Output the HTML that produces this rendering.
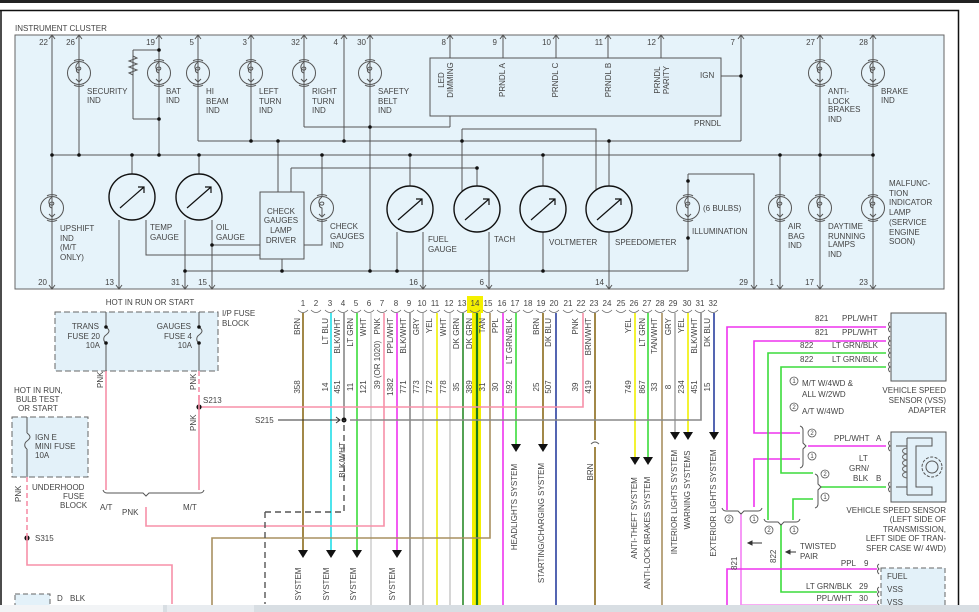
<!DOCTYPE html>
<html><head><meta charset="utf-8"><style>
html,body{margin:0;padding:0;background:#fff;}
svg{display:block;font-family:"Liberation Sans",sans-serif;font-size:8px;fill:#444;}
text{fill:#444;stroke:none;}
.w{fill:none;stroke:#555;stroke-width:1;}
</style></head><body>
<svg width="979" height="612" viewBox="0 0 979 612" xmlns="http://www.w3.org/2000/svg">
<defs>
<g id="bulb"><circle r="11.5" fill="none" stroke="#555"/><path d="M-5,-12 a6,3 0 0 1 10,0 M-5,12 a6,-3 0 0 0 10,0 M0,-11 c-4,3 -4,7 -1,8 c3,1 4,-3 1,-3 c-3,0 -4,5 0,6 l0,8" fill="none" stroke="#555"/><path d="M-3,6 l3,3 3,-3" fill="none" stroke="#555"/></g>
<g id="gauge"><circle r="23" fill="none" stroke="#111" stroke-width="1.4"/><path d="M-12,11 L12,-10 M6,-10 L12,-10 L12,-4" fill="none" stroke="#111" stroke-width="1.2"/></g>
<path id="up" d="M-3,4 L0,0 L3,4" fill="none" stroke="#555"/>
<path id="dn" d="M-3,-4 L0,0 L3,-4" fill="none" stroke="#555"/>
<path id="ar" d="M-5,-8 L5,-8 L0,0 Z" fill="#111"/>
</defs>
<rect x="0" y="0" width="979" height="3" fill="#222"/>
<path d="M0,10.5 H958.5 V605" fill="none" stroke="#111" stroke-width="1.5"/>
<path d="M1,10 V605" stroke="#111" stroke-width="1.5"/>
<text x="15" y="31">INSTRUMENT CLUSTER</text>
<rect x="15" y="35" width="929" height="254" fill="#e6f3fa" stroke="#666"/>
<g class="w">
<path d="M52,35V289 M79,35V155 M159,35V155 M133,50V119 M133,50H159 M133,119H159 M198,35V141 M198,141H741 M741,35V141 M721,76H741 M251,35V141 M344,35V141 M278,141V192 M304,35V127 M304,127H450 M450,116V127 M450,35V58 M370,35V271 M503,35V58 M556,35V58 M608,35V58 M661,35V58 M52,155H873 M132,155V174 M199,155V174 M119,220V289 M146,220V255H260 M185,220V289 M212,220V289 M212,245H260 M291,168H477 M291,168V192 M322,155V197 M322,219V245H304 M282,259V271 M185,271H688 M410,155V186 M397,232V271 M423,232V289 M477,168V186 M462,129V196 M462,129H596V195 M489,232V289 M543,155V186 M543,232V271 M609,141V186 M609,232V289 M688,174V271 M688,174H754V289 M780,155V289 M820,35V289 M873,35V289"/>
<path d="M133,56l4,2-8,3 8,3-8,3 8,3-8,3 4,2" />
</g>
<rect x="430" y="58" width="291" height="58" fill="#e3f1f9" stroke="#555"/>
<rect x="260" y="192" width="44" height="67" fill="#e3f1f9" stroke="#555"/>
<g fill="#111">
<circle cx="159" cy="50" r="1.8"/><circle cx="159" cy="119" r="1.8"/><circle cx="741" cy="76" r="1.8"/>
<circle cx="251" cy="141" r="1.8"/><circle cx="278" cy="141" r="1.8"/><circle cx="344" cy="141" r="1.8"/><circle cx="462" cy="141" r="1.8"/><circle cx="609" cy="141" r="1.8"/>
<circle cx="370" cy="127" r="1.8"/><circle cx="477" cy="168" r="1.8"/>
<circle cx="52" cy="155" r="1.8"/><circle cx="79" cy="155" r="1.8"/><circle cx="132" cy="155" r="1.8"/><circle cx="159" cy="155" r="1.8"/><circle cx="199" cy="155" r="1.8"/><circle cx="322" cy="155" r="1.8"/><circle cx="410" cy="155" r="1.8"/><circle cx="543" cy="155" r="1.8"/><circle cx="780" cy="155" r="1.8"/><circle cx="820" cy="155" r="1.8"/><circle cx="873" cy="155" r="1.8"/>
<circle cx="212" cy="245" r="1.8"/><circle cx="185" cy="271" r="1.8"/><circle cx="282" cy="271" r="1.8"/><circle cx="370" cy="271" r="1.8"/><circle cx="397" cy="271" r="1.8"/><circle cx="543" cy="271" r="1.8"/><circle cx="688" cy="181" r="1.8"/><circle cx="688" cy="238" r="1.8"/>
</g>
<g fill="#e6f3fa">
<use href="#bulb" x="79" y="73"/><use href="#bulb" x="159" y="73"/><use href="#bulb" x="198" y="73"/><use href="#bulb" x="251" y="73"/><use href="#bulb" x="304" y="73"/><use href="#bulb" x="370" y="73"/><use href="#bulb" x="820" y="73"/><use href="#bulb" x="873" y="73"/>
<use href="#bulb" x="52" y="208"/><use href="#bulb" x="322" y="208"/><use href="#bulb" x="688" y="208"/><use href="#bulb" x="780" y="208"/><use href="#bulb" x="820" y="208"/><use href="#bulb" x="873" y="208"/>
</g>
<circle cx="132" cy="197" r="23" fill="#e6f3fa"/><use href="#gauge" x="132" y="197"/>
<circle cx="199" cy="197" r="23" fill="#e6f3fa"/><use href="#gauge" x="199" y="197"/>
<circle cx="410" cy="209" r="23" fill="#e6f3fa"/><use href="#gauge" x="410" y="209"/>
<circle cx="477" cy="209" r="23" fill="#e6f3fa"/><use href="#gauge" x="477" y="209"/>
<circle cx="543" cy="209" r="23" fill="#e6f3fa"/><use href="#gauge" x="543" y="209"/>
<circle cx="609" cy="209" r="23" fill="#e6f3fa"/><use href="#gauge" x="609" y="209"/>
<g>
<use href="#up" x="52" y="35"/><use href="#up" x="79" y="35"/><use href="#up" x="159" y="35"/><use href="#up" x="198" y="35"/><use href="#up" x="251" y="35"/><use href="#up" x="304" y="35"/><use href="#up" x="344" y="35"/><use href="#up" x="370" y="35"/><use href="#up" x="450" y="35"/><use href="#up" x="503" y="35"/><use href="#up" x="556" y="35"/><use href="#up" x="608" y="35"/><use href="#up" x="661" y="35"/><use href="#up" x="741" y="35"/><use href="#up" x="820" y="35"/><use href="#up" x="873" y="35"/>
<use href="#dn" x="52" y="289"/><use href="#dn" x="119" y="289"/><use href="#dn" x="185" y="289"/><use href="#dn" x="212" y="289"/><use href="#dn" x="423" y="289"/><use href="#dn" x="489" y="289"/><use href="#dn" x="609" y="289"/><use href="#dn" x="754" y="289"/><use href="#dn" x="780" y="289"/><use href="#dn" x="820" y="289"/><use href="#dn" x="873" y="289"/>
</g>
<g text-anchor="end">
<text x="48" y="45">22</text><text x="75" y="45">26</text><text x="155" y="45">19</text><text x="194" y="45">5</text><text x="247" y="45">3</text><text x="300" y="45">32</text><text x="338" y="45">4</text><text x="366" y="45">30</text><text x="446" y="45">8</text><text x="497" y="45">9</text><text x="551" y="45">10</text><text x="603" y="45">11</text><text x="656" y="45">12</text><text x="735" y="45">7</text><text x="815" y="45">27</text><text x="868" y="45">28</text>
<text x="47" y="285">20</text><text x="114" y="285">13</text><text x="180" y="285">31</text><text x="207" y="285">15</text><text x="418" y="285">16</text><text x="484" y="285">6</text><text x="604" y="285">14</text><text x="748" y="285">29</text><text x="774" y="285">1</text><text x="814" y="285">17</text><text x="868" y="285">23</text>
</g>
<text x="87" y="94">SECURITY</text><text x="87" y="103">IND</text>
<text x="166" y="94">BAT</text><text x="166" y="103">IND</text>
<text x="206" y="94">HI</text><text x="206" y="104">BEAM</text><text x="206" y="113">IND</text>
<text x="259" y="94">LEFT</text><text x="259" y="104">TURN</text><text x="259" y="113">IND</text>
<text x="312" y="94">RIGHT</text><text x="312" y="104">TURN</text><text x="312" y="113">IND</text>
<text x="378" y="94">SAFETY</text><text x="378" y="104">BELT</text><text x="378" y="113">IND</text>
<text x="828" y="94">ANTI-</text><text x="828" y="104">LOCK</text><text x="828" y="112">BRAKES</text><text x="828" y="122">IND</text>
<text x="881" y="94">BRAKE</text><text x="881" y="103">IND</text>
<text x="700" y="78">IGN</text><text x="694" y="126">PRNDL</text>
<g text-anchor="middle">
<text transform="translate(444,80) rotate(-90)">LED</text><text transform="translate(453,80) rotate(-90)">DIMMING</text>
<text transform="translate(505,80) rotate(-90)">PRNDL A</text><text transform="translate(558,80) rotate(-90)">PRNDL C</text><text transform="translate(611,80) rotate(-90)">PRNDL B</text>
<text transform="translate(660,80) rotate(-90)">PRNDL</text><text transform="translate(669,80) rotate(-90)">PARITY</text>
<text x="281" y="214">CHECK</text><text x="281" y="223">GAUGES</text><text x="281" y="233">LAMP</text><text x="281" y="243">DRIVER</text>
</g>
<text x="60" y="231">UPSHIFT</text><text x="60" y="241">IND</text><text x="60" y="250">(M/T</text><text x="60" y="260">ONLY)</text>
<text x="150" y="230">TEMP</text><text x="150" y="240">GAUGE</text>
<text x="216" y="230">OIL</text><text x="216" y="240">GAUGE</text>
<text x="330" y="229">CHECK</text><text x="330" y="239">GAUGES</text><text x="330" y="248">IND</text>
<text x="428" y="242">FUEL</text><text x="428" y="252">GAUGE</text>
<text x="494" y="242">TACH</text><text x="549" y="245">VOLTMETER</text><text x="615" y="245">SPEEDOMETER</text>
<text x="703" y="211">(6 BULBS)</text><text x="692" y="234">ILLUMINATION</text>
<text x="788" y="229">AIR</text><text x="788" y="239">BAG</text><text x="788" y="248">IND</text>
<text x="828" y="229">DAYTIME</text><text x="828" y="239">RUNNING</text><text x="828" y="247">LAMPS</text><text x="828" y="257">IND</text>
<text x="889" y="186">MALFUNC-</text><text x="889" y="196">TION</text><text x="889" y="205">INDICATOR</text><text x="889" y="215">LAMP</text><text x="889" y="225">(SERVICE</text><text x="889" y="235">ENGINE</text><text x="889" y="244">SOON)</text>

<rect x="467" y="296" width="16" height="17" fill="#f4f000"/>
<g text-anchor="middle">
<text x="303" y="306">1</text><text x="316" y="306">2</text><text x="330" y="306">3</text><text x="343" y="306">4</text><text x="356" y="306">5</text><text x="369" y="306">6</text><text x="382" y="306">7</text><text x="396" y="306">8</text><text x="409" y="306">9</text><text x="422" y="306">10</text><text x="435" y="306">11</text><text x="449" y="306">12</text><text x="462" y="306">13</text><text x="475" y="306">14</text><text x="488" y="306">15</text><text x="502" y="306">16</text><text x="515" y="306">17</text><text x="528" y="306">18</text><text x="541" y="306">19</text><text x="554" y="306">20</text><text x="568" y="306">21</text><text x="581" y="306">22</text><text x="594" y="306">23</text><text x="607" y="306">24</text><text x="621" y="306">25</text><text x="634" y="306">26</text><text x="647" y="306">27</text><text x="660" y="306">28</text><text x="673" y="306">29</text><text x="687" y="306">30</text><text x="700" y="306">31</text><text x="713" y="306">32</text>
</g>
<path d="M298,310q5,5 10,0 M311,310q5,5 10,0 M325,310q5,5 10,0 M338,310q5,5 10,0 M351,310q5,5 10,0 M364,310q5,5 10,0 M377,310q5,5 10,0 M391,310q5,5 10,0 M404,310q5,5 10,0 M417,310q5,5 10,0 M430,310q5,5 10,0 M444,310q5,5 10,0 M457,310q5,5 10,0 M470,310q5,5 10,0 M483,310q5,5 10,0 M497,310q5,5 10,0 M510,310q5,5 10,0 M523,310q5,5 10,0 M536,310q5,5 10,0 M549,310q5,5 10,0 M563,310q5,5 10,0 M576,310q5,5 10,0 M589,310q5,5 10,0 M602,310q5,5 10,0 M616,310q5,5 10,0 M629,310q5,5 10,0 M642,310q5,5 10,0 M655,310q5,5 10,0 M668,310q5,5 10,0 M682,310q5,5 10,0 M695,310q5,5 10,0 M708,310q5,5 10,0" fill="none" stroke="#666" stroke-width="0.8"/>

<rect x="472" y="313" width="9" height="299" fill="#f4f000"/>
<g fill="none" stroke-width="1.6">
<path d="M303,313V550" stroke="#8b6b1b"/>
<path d="M331,313V550" stroke="#22dde8"/>
<path d="M344,313V420" stroke="#888"/>
<path d="M357,313V550" stroke="#3bdc3b"/>
<path d="M371,313V612" stroke="#d0d0d0"/>
<path d="M384,313V526H146V507" stroke="#f790a8"/>
<path d="M397,313V550" stroke="#ee33ee"/>
<path d="M410,313V612" stroke="#888"/>
<path d="M423,313V612" stroke="#bbb"/>
<path d="M437,313V612" stroke="#f0f000"/>
<path d="M450,313V612" stroke="#ccc"/>
<path d="M463,313V612" stroke="#2a8a2a"/>
<path d="M477,313V612" stroke="#1a7a1a" stroke-width="2.2"/>
<path d="M490,313V538H212V612" stroke="#a89060"/>
<path d="M503,313V612" stroke="#ee33ee"/>
<path d="M516,313V445" stroke="#3bdc3b"/>
<path d="M543,313V445" stroke="#8b6b1b"/>
<path d="M556,313V612" stroke="#2a3f9e"/>
<path d="M583,313V407H200" stroke="#f790a8"/>
<path d="M595,313V440 M595,447V612" stroke="#8b6b1b"/>
<path d="M635,313V458" stroke="#f0f000"/>
<path d="M648,313V458" stroke="#3bdc3b"/>
<path d="M662,313V612" stroke="#a89060"/>
<path d="M675,313V432" stroke="#aaa"/>
<path d="M688,313V432" stroke="#f0f000"/>
<path d="M701,313V420H350" stroke="#888"/>
<path d="M714,313V432" stroke="#2a3f9e"/>
</g>
<path d="M591,444q4,-4 8,0" fill="none" stroke="#666"/>
<g fill="#111">
<use href="#ar" x="303" y="558"/><use href="#ar" x="331" y="558"/><use href="#ar" x="357" y="558"/><use href="#ar" x="397" y="558"/>
<use href="#ar" x="516" y="452"/><use href="#ar" x="543" y="452"/><use href="#ar" x="635" y="465"/><use href="#ar" x="648" y="465"/>
<use href="#ar" x="675" y="440"/><use href="#ar" x="688" y="440"/><use href="#ar" x="714" y="440"/>
<circle cx="344" cy="420" r="2.5"/>
</g>
<g text-anchor="end">
<text transform="translate(300,318) rotate(-90)">BRN</text><text transform="translate(328,318) rotate(-90)">LT BLU</text><text transform="translate(340,318) rotate(-90)">BLK/WHT</text><text transform="translate(353,318) rotate(-90)">LT GRN</text><text transform="translate(366,318) rotate(-90)">WHT</text><text transform="translate(380,318) rotate(-90)">PNK</text><text transform="translate(393,318) rotate(-90)">PPL/WHT</text><text transform="translate(406,318) rotate(-90)">BLK/WHT</text><text transform="translate(419,318) rotate(-90)">GRY</text><text transform="translate(432,318) rotate(-90)">YEL</text><text transform="translate(446,318) rotate(-90)">WHT</text><text transform="translate(459,318) rotate(-90)">DK GRN</text><text transform="translate(472,318) rotate(-90)">DK GRN</text><text transform="translate(485,318) rotate(-90)">TAN</text><text transform="translate(498,318) rotate(-90)">PPL</text><text transform="translate(512,318) rotate(-90)">LT GRN/BLK</text><text transform="translate(539,318) rotate(-90)">BRN</text><text transform="translate(551,318) rotate(-90)">DK BLU</text><text transform="translate(578,318) rotate(-90)">PNK</text><text transform="translate(591,318) rotate(-90)">BRN/WHT</text><text transform="translate(631,318) rotate(-90)">YEL</text><text transform="translate(645,318) rotate(-90)">LT GRN</text><text transform="translate(657,318) rotate(-90)">TAN/WHT</text><text transform="translate(671,318) rotate(-90)">GRY</text><text transform="translate(684,318) rotate(-90)">YEL</text><text transform="translate(697,318) rotate(-90)">BLK/WHT</text><text transform="translate(710,318) rotate(-90)">DK BLU</text>
</g>
<g text-anchor="middle">
<text transform="translate(300,387) rotate(-90)">358</text><text transform="translate(328,387) rotate(-90)">14</text><text transform="translate(340,387) rotate(-90)">451</text><text transform="translate(353,387) rotate(-90)">11</text><text transform="translate(366,387) rotate(-90)">121</text><text transform="translate(380,365) rotate(-90)">39 (OR 1020)</text><text transform="translate(393,387) rotate(-90)">1382</text><text transform="translate(406,387) rotate(-90)">771</text><text transform="translate(419,387) rotate(-90)">773</text><text transform="translate(432,387) rotate(-90)">772</text><text transform="translate(446,387) rotate(-90)">778</text><text transform="translate(459,387) rotate(-90)">35</text><text transform="translate(472,387) rotate(-90)">389</text><text transform="translate(485,387) rotate(-90)">31</text><text transform="translate(498,387) rotate(-90)">30</text><text transform="translate(512,387) rotate(-90)">592</text><text transform="translate(539,387) rotate(-90)">25</text><text transform="translate(551,387) rotate(-90)">507</text><text transform="translate(578,387) rotate(-90)">39</text><text transform="translate(591,387) rotate(-90)">419</text><text transform="translate(631,387) rotate(-90)">749</text><text transform="translate(645,387) rotate(-90)">867</text><text transform="translate(657,387) rotate(-90)">33</text><text transform="translate(671,387) rotate(-90)">8</text><text transform="translate(684,387) rotate(-90)">234</text><text transform="translate(697,387) rotate(-90)">451</text><text transform="translate(710,387) rotate(-90)">15</text>
<text transform="translate(345,460) rotate(-90)">BLK/WHT</text>
<text transform="translate(301,584) rotate(-90)">SYSTEM</text><text transform="translate(329,584) rotate(-90)">SYSTEM</text><text transform="translate(356,584) rotate(-90)">SYSTEM</text><text transform="translate(395,584) rotate(-90)">SYSTEM</text>
<text transform="translate(517,507) rotate(-90)">HEADLIGHTS SYSTEM</text>
<text transform="translate(544,523) rotate(-90)">STARTING/CHARGING SYSTEM</text>
<text transform="translate(593,472) rotate(-90)">BRN</text>
<text transform="translate(637,518) rotate(-90)">ANTI-THEFT SYSTEM</text>
<text transform="translate(650,533) rotate(-90)">ANTI-LOCK BRAKES SYSTEM</text>
<text transform="translate(677,502) rotate(-90)">INTERIOR LIGHTS SYSTEM</text>
<text transform="translate(690,490) rotate(-90)">WARNING SYSTEMS</text>
<text transform="translate(716,503) rotate(-90)">EXTERIOR LIGHTS SYSTEM</text>
</g>
<path d="M265,512H344V420 M265,512V604" fill="none" stroke="#555" stroke-width="1.4" stroke-dasharray="6,4"/>
<path d="M278,420H340 M336,417l4,3-4,3" fill="none" stroke="#333"/>
<text x="255" y="423">S215</text>

<text x="150" y="305" text-anchor="middle">HOT IN RUN OR START</text>
<rect x="55" y="312" width="163" height="59" fill="#e3f1f9" stroke="#666" stroke-dasharray="6,3"/>
<text x="222" y="316">I/P FUSE</text><text x="222" y="326">BLOCK</text>
<g text-anchor="end"><text x="99" y="329">TRANS</text><text x="100" y="339">FUSE 20</text><text x="100" y="348">10A</text>
<text x="191" y="329">GAUGES</text><text x="192" y="339">FUSE 4</text><text x="192" y="348">10A</text></g>
<path d="M106,312V327 M106,343V371 M199,312V327 M199,343V371 M106,327c4,3 4,5 0,8 c-3,2 -3,6 0,8 M199,327c4,3 4,5 0,8 c-3,2 -3,6 0,8" fill="none" stroke="#555"/>
<g fill="#111"><circle cx="106" cy="327" r="1.8"/><circle cx="106" cy="343" r="1.8"/><circle cx="199" cy="327" r="1.8"/><circle cx="199" cy="343" r="1.8"/><circle cx="199" cy="407" r="2.6"/><circle cx="27" cy="538" r="2.6"/><circle cx="27" cy="433" r="1.8"/><circle cx="27" cy="449" r="1.8"/></g>
<path d="M106,371V490 M199,395V490 M27,538V565H172V604" fill="none" stroke="#f790a8" stroke-width="1.6"/>
<path d="M199,371V400 M27,477V538" fill="none" stroke="#f790a8" stroke-width="1.6" stroke-dasharray="5,3"/>
<text x="203" y="403">S213</text>
<text transform="translate(103,388) rotate(-90)">PNK</text><text transform="translate(196,390) rotate(-90)">PNK</text><text transform="translate(196,431) rotate(-90)">PNK</text><text transform="translate(21,502) rotate(-90)">PNK</text>
<path d="M103,490q1,3 4,3H143l3,3 3,-3H200q3,0 4,-3" fill="none" stroke="#555"/>
<text x="100" y="510">A/T</text><text x="183" y="510">M/T</text><text x="122" y="515">PNK</text>
<text x="14" y="393">HOT IN RUN,</text><text x="16" y="402">BULB TEST</text><text x="18" y="411">OR START</text>
<rect x="12" y="417" width="76" height="60" fill="#e3f1f9" stroke="#666" stroke-dasharray="6,3"/>
<path d="M27,417V433 M27,449V477 M27,433c4,3 4,5 0,8 c-3,2 -3,6 0,8" fill="none" stroke="#555"/>
<text x="35" y="440">IGN E</text><text x="35" y="449">MINI FUSE</text><text x="35" y="458">10A</text>
<text x="32" y="490">UNDERHOOD</text><text x="63" y="499">FUSE</text><text x="60" y="508">BLOCK</text>
<text x="35" y="541">S315</text>
<rect x="15" y="594" width="35" height="12" fill="#e3f1f9" stroke="#666" stroke-dasharray="5,3"/>
<text x="57" y="601">D</text><text x="70" y="601">BLK</text>

<g fill="none" stroke-width="1.6">
<path d="M886,327H727V510" stroke="#ee33ee"/>
<path d="M886,341H754V433H800" stroke="#ee33ee"/>
<path d="M800,459H754V507" stroke="#ee33ee"/>
<path d="M808,446H886" stroke="#ee33ee"/>
<path d="M886,353H768V520" stroke="#3bdc3b"/>
<path d="M886,367H781V473H813" stroke="#3bdc3b"/>
<path d="M813,499H793V520" stroke="#3bdc3b"/>
<path d="M821,487H886" stroke="#3bdc3b"/>
<path d="M781,525V592H877" stroke="#3bdc3b"/>
<path d="M877,569H727V612" stroke="#ee33ee"/>
<path d="M741,514V612" stroke="#ee33ee" stroke-width="1"/>
</g>
<path d="M877,605H741" stroke="#f790f0" stroke-width="1.4"/>
<path d="M722,508q1,3 4,3H738l3,3 3,-3H758q3,0 4,-3 M764,519q1,3 4,3H778l3,3 3,-3H796q3,0 4,-3 M800,426q3,1 3,4V443l3,3 -3,3V464q0,3 -3,4 M815,474q3,1 3,4V484l3,3 -3,3V504q0,3 -3,4" fill="none" stroke="#555"/>
<path d="M890,322q-3,2 0,5 q-3,2 0,5 M890,336q-3,2 0,5 q-3,2 0,5 M890,348q-3,2 0,5 q-3,2 0,5 M890,362q-3,2 0,5 q-3,2 0,5 M890,441q-3,2 0,5 q-3,2 0,5 M890,482q-3,2 0,5 q-3,2 0,5 M879,564q-3,2 0,5 q-3,2 0,5 M879,587q-3,2 0,5 q-3,2 0,5 M879,600q-3,2 0,5 q-3,2 0,5" fill="none" stroke="#555"/>
<text x="815" y="321">821</text><text x="842" y="321">PPL/WHT</text>
<text x="815" y="335">821</text><text x="842" y="335">PPL/WHT</text>
<text x="800" y="348">822</text><text x="832" y="348">LT GRN/BLK</text>
<text x="800" y="362">822</text><text x="832" y="362">LT GRN/BLK</text>
<rect x="891" y="313" width="55" height="68" fill="#e3f1f9" stroke="#555"/>
<g text-anchor="end"><text x="946" y="393">VEHICLE SPEED</text><text x="946" y="403">SENSOR (VSS)</text><text x="946" y="413">ADAPTER</text>
<text x="946" y="513">VEHICLE SPEED SENSOR</text><text x="946" y="522">(LEFT SIDE OF</text><text x="946" y="532">TRANSMISSION,</text><text x="946" y="541">LEFT SIDE OF TRAN-</text><text x="946" y="551">SFER CASE W/ 4WD)</text>
<text x="856" y="566">PPL</text><text x="852" y="589">LT GRN/BLK</text><text x="852" y="601">PPL/WHT</text></g>
<g fill="none" stroke="#555" stroke-width="0.8">
<circle cx="794" cy="381" r="4"/><circle cx="794" cy="407" r="4"/><circle cx="812" cy="433" r="4"/><circle cx="812" cy="456" r="4"/><circle cx="825" cy="474" r="4"/><circle cx="825" cy="497" r="4"/><circle cx="729" cy="519" r="4"/><circle cx="754" cy="519" r="4"/><circle cx="769" cy="530" r="4"/><circle cx="794" cy="530" r="4"/>
</g>
<g text-anchor="middle" font-size="6"><text x="794" y="383">1</text><text x="794" y="409">2</text><text x="812" y="435">2</text><text x="812" y="458">1</text><text x="825" y="476">2</text><text x="825" y="499">1</text><text x="729" y="521">2</text><text x="754" y="521">1</text><text x="769" y="532">2</text><text x="794" y="532">1</text></g>
<text x="802" y="386">M/T W/4WD &amp;</text><text x="802" y="397">ALL W/2WD</text><text x="802" y="414">A/T W/4WD</text>
<text x="834" y="441">PPL/WHT</text><text x="876" y="441">A</text>
<text x="859" y="461">LT</text><text x="849" y="471">GRN/</text><text x="853" y="481">BLK</text><text x="876" y="481">B</text>
<rect x="891" y="432" width="55" height="70" fill="#e3f1f9" stroke="#555"/>
<path d="M896,446H907 M896,487H907 M907,438V495 M907,438H932V446H916V487H932V495H907" fill="none" stroke="#555"/>
<path d="M907,448c-6,1 -6,5 0,6 c-6,1 -6,5 0,6 c-6,1 -6,5 0,6 c-6,1 -6,5 0,6 c-6,1 -6,5 0,6" fill="none" stroke="#666"/>
<circle cx="932" cy="467" r="10" fill="none" stroke="#555" stroke-dasharray="3,1.5"/><circle cx="932" cy="467" r="6" fill="none" stroke="#555"/>
<text x="800" y="549">TWISTED</text><text x="800" y="559">PAIR</text>
<path d="M748,543H762 M786,552H796 M748,543l4,-2v4z M786,552l4,-2v4z" fill="#333" stroke="#333"/>
<text transform="translate(737,570) rotate(-90)">821</text><text transform="translate(776,563) rotate(-90)">822</text>
<text x="864" y="566">9</text><text x="859" y="589">29</text><text x="859" y="601">30</text>
<rect x="881" y="568" width="64" height="50" fill="#e3f1f9" stroke="#666" stroke-dasharray="5,3"/>
<text x="887" y="579">FUEL</text><text x="887" y="592">VSS</text><text x="887" y="605">VSS</text>
<rect x="0" y="605" width="979" height="7" fill="#d8dee3"/>
<rect x="0" y="605" width="163" height="7" fill="#f2f4f6"/>
<rect x="167" y="605" width="87" height="7" fill="#e8ecf0"/>
</svg>
</body></html>
